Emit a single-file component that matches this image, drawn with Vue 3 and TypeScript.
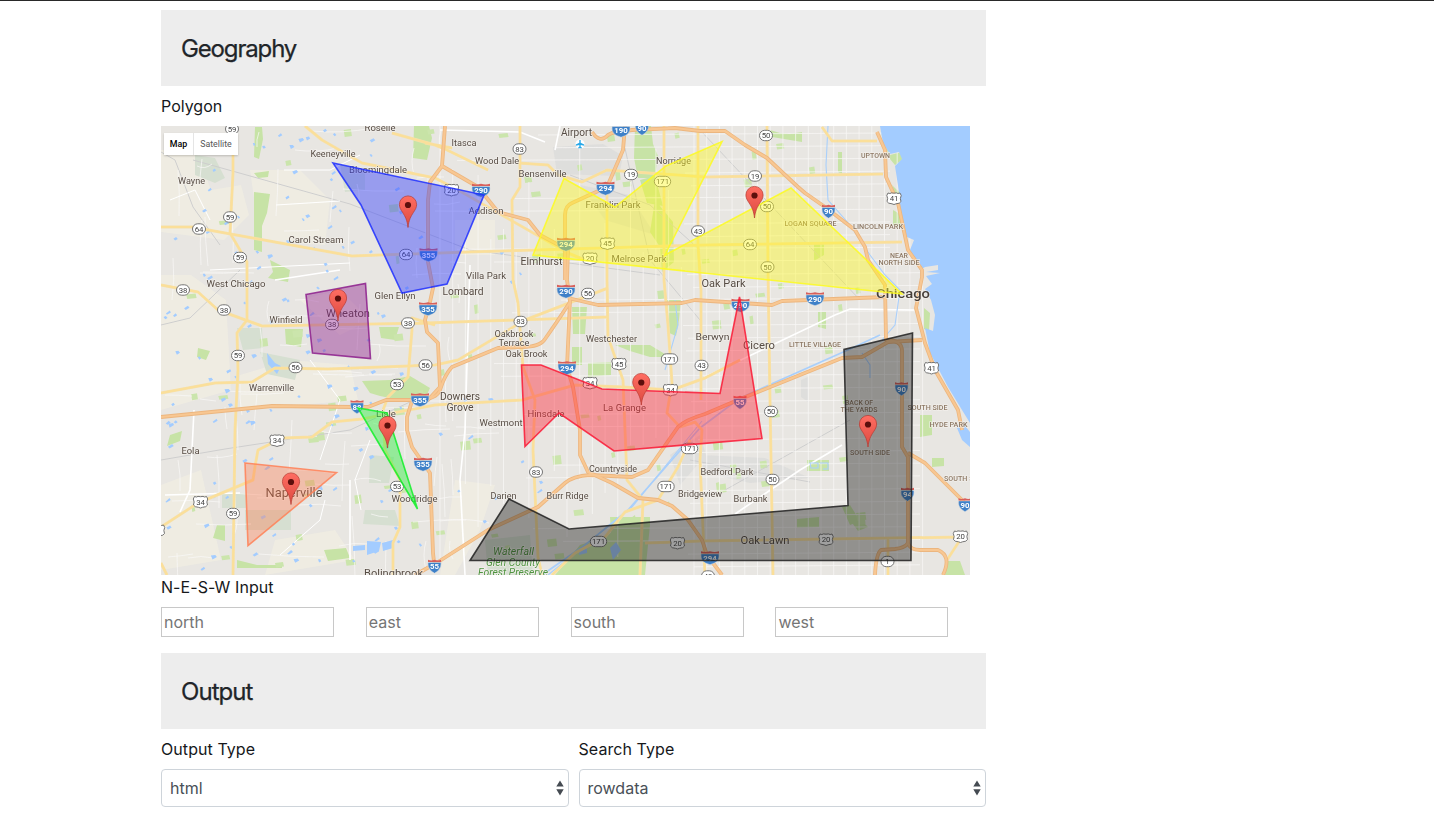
<script setup lang="ts">
import { ref } from 'vue'

interface Label { t: string; x: number; y: number; w: number; s: number; k?: string }
interface Area { name: string; points: string; stroke: string; fill: string; opacity: number }
type Shield = [kind: 'o' | 'u' | 'i', text: string, x: number, y: number]

const bounds = ref([
  { name: 'north', value: '' },
  { name: 'east', value: '' },
  { name: 'south', value: '' },
  { name: 'west', value: '' },
])
const selects = ref([
  { label: 'Output Type', value: 'html' },
  { label: 'Search Type', value: 'rowdata' },
])

// Small deterministic generator, so streets and ponds keep their places.
let seed = 7
const rnd = (): number => {
  seed = (seed * 16807) % 2147483647
  return seed / 2147483647
}

const streets: string[] = []
for (let x = 440; x < 925; x += 12.7) {
  const a = x > 690 ? 126 : 126 + rnd() * 150
  streets.push(`M${x.toFixed(1)} ${a.toFixed(0)}V${(x > 690 ? 575 : 380 + rnd() * 195).toFixed(0)}`)
}
for (let y = 135; y < 575; y += 12.7) {
  streets.push(`M${(x0(y)).toFixed(0)} ${y.toFixed(1)}L${y < 270 ? 890 : 920} ${(y - 2).toFixed(1)}`)
}
function x0(y: number): number {
  return y % 3 > 1.4 ? 680 + rnd() * 20 : 450 + rnd() * 120
}
for (let i = 0; i < 95; i++) {
  const x = 165 + rnd() * 300
  const y = 130 + rnd() * 430
  const l = 15 + rnd() * 50
  streets.push(
    rnd() > 0.5
      ? `M${x.toFixed(0)} ${y.toFixed(0)}q${(l / 2).toFixed(0)} ${(rnd() * 8 - 4).toFixed(0)} ${l.toFixed(0)} ${(rnd() * 6 - 3).toFixed(0)}`
      : `M${x.toFixed(0)} ${y.toFixed(0)}q${(rnd() * 8 - 4).toFixed(0)} ${(l / 2).toFixed(0)} ${(rnd() * 6 - 3).toFixed(0)} ${l.toFixed(0)}`,
  )
}
const ponds = Array.from({ length: 150 }, () => {
  const x = 163 + rnd() * (rnd() > 0.25 ? 240 : 390)
  const y = 130 + rnd() * 440
  const a = 1.5 + rnd() * 3
  return `M${x.toFixed(1)} ${y.toFixed(1)}l${a.toFixed(1)} ${(-a * rnd()).toFixed(1)} ${(1 + rnd()).toFixed(1)} 2 ${(-a).toFixed(1)} ${(a * 0.6).toFixed(1)}z`
}).join('')
const greens = Array.from({ length: 95 }, () => {
  const x = 165 + rnd() * 720
  const y = 130 + rnd() * 435
  const w = 3 + rnd() * 7
  const h = 3 + rnd() * 6
  return `M${x.toFixed(1)} ${y.toFixed(1)}l${w.toFixed(1)} -1 1 ${h.toFixed(1)} -${w.toFixed(1)} 1z`
}).join('')

const parks = [
  'M254 173l15-2-1 6-10 1zM254 192l16 2-3 19-5 13 0 26-8-2zM270 260l20 10-2 12-20-4 5-6zM255 127l7 0 1 12-4 20-5-2z',
  'M414 126l15 0 3 12-5 22-14-2zM198 348l12 3-4 9-9-3zM285 329l18 0-2 18-15-3zM379 327l20 0-4 13-14-2zM362 381l28-1 20-4 20 12-5 11-35-1-10-2-10-3z',
  'M635 126l16 0 2 18 5 12-3 22-17 0-4-20zM640 180l15-4 8 30-16-3zM655 200l18 22 1 40-12 10-2-25-10-15z',
  'M572 307l15 0-2 27-12 0zM572 347l10 0 0 18-10 0zM588 363l23-1 0 13-23 2zM667 300l14 0-2 20-3 16-9-4zM615 345l35 0 20 12-20 0-20-6z',
  'M610 517l40 0 0 8-5 50-65 0 12-12 20-12zM580 545l25-8 30-22 10 60-90 0z',
  'M818 312l8 0 0 17-8-2zM838 152l4 0 0 22-4-2zM770 130l10 3 10 1 12-2 0 10-12-2-18-3zM814 243l10 0 0 12-10 6z',
  'M842 507l8-2 10 16-10 4zM850 520l10-1 8 8-10 4zM797 519l22-2 0 10-22 1zM807 460l22 0 0 11-22 0zM920 415l12 0 0 20-12 2zM932 458l12 0 0 8-12 1zM948 561l12 0 5 14-20 0z',
  'M880 130l10 25 12-3 0 8-7 5-5-6zM892 185l8 8-3 10zM893 210l7 4 2 13-9-2zM924 308l6 5-1 18-5-2zM324 550l22-2 4 10-22 3zM237 560l20 5 25 0 0 3-45 0zM170 435l12-4-2 10-13 5zM217 525l8 0 0 16-12-3z',
]
const forest = [
  'M195 155l20 3 10 20-10 5-20-8zM237 328l25 0 1 20-20 2zM260 352l40 8-5 20-28-6zM340 164l25 8 0 18-20 2zM245 510l46 0 0 20-46 0zM365 510l30 0 5 16-37-2zM222 493l24 0 0 15-24 0zM485 540l45-5 3 40-45 0zM370 455l24 2-5 26-20 0z',
]

const orangeRoads = [
  'M445 126L442 166 430 182 428 200 428 262 433 288 430 302 425 320 427 332 438 343 440 387 428 400 412 401 407 417 407 430 412 447 430 473 433 553 434 562',
  'M442 166L478 187 498 212 528 220 540 235 568 250 567 280 570 300 567 367 573 387 580 430 580 455 588 472 612 483 638 498 658 500 672 506 688 520 702 540 707 555 722 575',
  'M625 126L623 150 607 187 572 203Q565 206 565 215L565 280',
  'M592 132Q600 144 608 135L612 133 632 130 675 128 700 131 725 131 745 145 767 158 798 187 805 193 825 207 855 230 865 247 868 260 885 285 886 340Q902 340 902 351L902 447 908 457 908 543Q905 548 895 549L881 550Q876 554 875 575',
  'M908 453L925 463 965 503',
  'M908 543Q910 550 920 550L938 550Q952 556 943 575',
  'M568 298L598 305 682 303 695 300 772 305 782 301 885 297',
  'M570 302Q555 325 545 339 540 347 522 347L498 348 452 367Q445 374 440 390 437 400 412 401',
  'M161 417L272 406 352 407 368 407 386 400 428 400',
  'M415 575L438 562 488 530 538 507 565 483Q573 476 590 475L632 477 648 470 678 427Q685 420 705 414L738 400 842 358 862 357 888 342 922 340',
  'M877 132L885 150 886 177 898 203 908 250 922 270 922 277 916 308 925 343 935 370 958 410 962 430',
]
const yellowRoads = [
  'M233 126L233 173 230 233 247 262 247 320 237 333 238 370 235 430 233 575',
  'M161 227L192 227 352 256 468 252 705 245 902 242',
  'M305 126L322 140 362 163 435 178 458 190 528 230 568 253 592 263',
  'M392 133L435 145 445 149 488 170M425 143L452 148',
  'M161 285L198 292 218 310 262 326 435 323 425 323 608 317',
  'M161 393L215 383 252 382 275 368 328 369 435 365 458 360 525 320 608 288',
  'M435 325L412 318 412 330 408 377 388 397 383 410 385 450 400 480 400 527 393 543 393 575',
  'M161 527L198 503 253 480 Q255 465 258 450L282 438 312 437 332 422 362 419 435 405 522 400 575 385 623 387 672 390 705 378 740 360',
  'M520 126L520 187 512 200 513 280 518 303 523 367 535 400 533 450 538 557 542 575',
  'M607 187L607 280 608 337 623 380 625 430 627 480 643 500 640 575',
  'M664 126L664 280 668 325 672 383 667 413 680 427 695 422 702 430 700 460 705 575',
  'M698 126L698 245 701 290 701 400',
  'M767 126L768 270 770 400 773 575',
  'M518 163L548 165 558 175 582 182 607 170 705 177 883 174',
  'M822 127L832 141 877 141',
  'M645 543L701 541 962 537M888 538V575M962 537L947 560',
  'M552 575L575 553 605 537 625 512 658 500 678 467 690 440',
  'M161 563L167 575',
]

const labels: Label[] = [
  { t: 'Roselle', x: 380, y: 131, w: 31, s: 9 },
  { t: 'Keeneyville', x: 333, y: 157, w: 45, s: 9 },
  { t: 'Bloomingdale', x: 378, y: 173, w: 58, s: 9 },
  { t: 'Wayne', x: 191.5, y: 184, w: 27, s: 9 },
  { t: 'Carol Stream', x: 316, y: 243, w: 55, s: 9.5 },
  { t: 'Itasca', x: 464, y: 146, w: 25, s: 9 },
  { t: 'Wood Dale', x: 497, y: 164, w: 44, s: 9 },
  { t: 'Airport', x: 576.5, y: 135.5, w: 31, s: 10 },
  { t: 'Bensenville', x: 542.5, y: 177, w: 48, s: 9 },
  { t: 'Addison', x: 486, y: 214, w: 35, s: 9 },
  { t: 'Norridge', x: 673.5, y: 164, w: 35, s: 9 },
  { t: 'Franklin Park', x: 613, y: 208, w: 55, s: 9 },
  { t: 'Elmhurst', x: 541.5, y: 264.5, w: 42, s: 10.5 },
  { t: 'Melrose Park', x: 639, y: 262, w: 55, s: 9 },
  { t: 'Villa Park', x: 486, y: 279, w: 40, s: 9 },
  { t: 'Lombard', x: 463, y: 295, w: 41, s: 10 },
  { t: 'West Chicago', x: 236, y: 287, w: 59, s: 9.5 },
  { t: 'Glen Ellyn', x: 395, y: 298.5, w: 41, s: 9 },
  { t: 'Wheaton', x: 348, y: 317, w: 44, s: 11 },
  { t: 'Winfield', x: 286, y: 323, w: 33, s: 9 },
  { t: 'Warrenville', x: 271.5, y: 391, w: 45, s: 9 },
  { t: 'Lisle', x: 386, y: 417, w: 20, s: 9.5 },
  { t: 'Eola', x: 190.5, y: 454, w: 18, s: 9 },
  { t: 'Naperville', x: 294, y: 496.5, w: 57, s: 12.5 },
  { t: 'Woodridge', x: 414.5, y: 502, w: 46, s: 9 },
  { t: 'Bolingbrook', x: 393.5, y: 577, w: 59, s: 10 },
  { t: 'Oakbrook', x: 514, y: 336.5, w: 39, s: 9 },
  { t: 'Terrace', x: 514, y: 345.5, w: 31, s: 9 },
  { t: 'Oak Brook', x: 526.5, y: 356.5, w: 42, s: 9 },
  { t: 'Westchester', x: 611.5, y: 341.5, w: 51, s: 9 },
  { t: 'Downers', x: 460, y: 400, w: 40, s: 10 },
  { t: 'Grove', x: 460, y: 410.5, w: 27, s: 10 },
  { t: 'Westmont', x: 501, y: 425.5, w: 43, s: 9 },
  { t: 'Hinsdale', x: 546, y: 417, w: 37, s: 9 },
  { t: 'La Grange', x: 624.5, y: 411, w: 43, s: 9 },
  { t: 'Countryside', x: 613, y: 471.5, w: 48, s: 9 },
  { t: 'Darien', x: 503.5, y: 499, w: 26, s: 9 },
  { t: 'Burr Ridge', x: 567.5, y: 499, w: 42, s: 9 },
  { t: 'Bridgeview', x: 700, y: 497, w: 44, s: 9 },
  { t: 'Bedford Park', x: 727, y: 475, w: 53, s: 9 },
  { t: 'Burbank', x: 750.5, y: 502, w: 34, s: 9 },
  { t: 'Oak Lawn', x: 765, y: 544, w: 49, s: 11 },
  { t: 'Oak Park', x: 723.5, y: 287, w: 44, s: 10.5 },
  { t: 'Berwyn', x: 712.5, y: 340, w: 34, s: 9.5 },
  { t: 'Cicero', x: 759, y: 348.5, w: 32, s: 10.5 },
  { t: 'Chicago', x: 903, y: 298, w: 54, s: 13, k: 'city' },
  { t: 'UPTOWN', x: 875.5, y: 158, w: 29, s: 7, k: 'area' },
  { t: 'LOGAN SQUARE', x: 810.5, y: 226, w: 52, s: 7, k: 'area' },
  { t: 'LINCOLN PARK', x: 878, y: 229, w: 50, s: 7, k: 'area' },
  { t: 'NEAR', x: 899, y: 257.5, w: 18, s: 7, k: 'area' },
  { t: 'NORTH SIDE', x: 899, y: 265, w: 41, s: 7, k: 'area' },
  { t: 'LITTLE VILLAGE', x: 815, y: 347, w: 52, s: 7, k: 'area' },
  { t: 'BACK OF', x: 859, y: 404.5, w: 28, s: 7, k: 'area' },
  { t: 'THE YARDS', x: 859, y: 412, w: 37, s: 7, k: 'area' },
  { t: 'SOUTH SIDE', x: 927.5, y: 409.5, w: 40, s: 7, k: 'area' },
  { t: 'HYDE PARK', x: 948.5, y: 427, w: 38, s: 7, k: 'area' },
  { t: 'SOUTH SIDE', x: 870, y: 455, w: 40, s: 7, k: 'area' },
  { t: 'SOUTH SHORE', x: 968, y: 480.5, w: 48, s: 7, k: 'area' },
  { t: 'Waterfall', x: 513.5, y: 555, w: 41, s: 10, k: 'nature' },
  { t: 'Glen County', x: 513, y: 565.5, w: 54, s: 10, k: 'nature' },
  { t: 'Forest Preserve', x: 513, y: 576, w: 70, s: 10, k: 'nature' },
]

const shields: Shield[] = [
  ['o', '59', 232, 129], ['o', '59', 230, 217], ['o', '64', 199, 229], ['o', '59', 240, 257.5], ['o', '64', 406, 254.5],
  ['o', '38', 183, 290], ['o', '38', 224, 310], ['o', '38', 332, 324.5], ['o', '38', 408, 323], ['o', '59', 238, 355.5],
  ['o', '56', 295.5, 367.5], ['o', '56', 425.5, 365], ['o', '53', 397, 384.5], ['u', '34', 277, 440.5], ['u', '34', 200.5, 502],
  ['o', '59', 233, 513.5], ['u', '', 157.5, 530.5], ['o', '53', 397, 486.5], ['o', '83', 519.5, 149], ['u', '20', 451.5, 190], ['o', '19', 631, 174.5],
  ['o', '171', 662.5, 181.5], ['u', '45', 607.5, 243.5], ['u', '20', 590, 258.5], ['o', '43', 698, 231], ['o', '50', 766, 135.5],
  ['o', '19', 755, 176], ['o', '50', 767, 206.5], ['o', '64', 750, 244.5], ['o', '50', 767.5, 267], ['u', '41', 894, 198.5],
  ['o', '56', 588, 293.5], ['o', '83', 520.5, 321.5], ['u', '45', 619, 364], ['o', '171', 669.5, 359], ['o', '43', 701.5, 365.5],
  ['u', '34', 590, 383], ['u', '34', 670.5, 390], ['u', '41', 931.5, 368], ['o', '50', 771, 411.5], ['o', '171', 689.5, 448.5],
  ['o', '83', 536, 472], ['o', '171', 666, 486.5], ['o', '171', 598.5, 541.5], ['u', '20', 677.5, 543], ['o', '50', 772.5, 479.5],
  ['u', '20', 826, 539.5], ['u', '20', 960.5, 536.5], ['o', '1', 887.5, 561.5], ['o', '43', 708, 576],
  ['i', '290', 481, 190], ['i', '355', 428.5, 254.5], ['i', '190', 621, 130], ['i', '90', 642, 128], ['i', '294', 605.5, 188],
  ['i', '294', 566, 244], ['i', '90', 828.5, 211], ['i', '355', 428, 308.5], ['i', '290', 566, 291], ['i', '294', 567, 367.5],
  ['i', '290', 740.5, 305], ['i', '290', 815, 298.5], ['i', '355', 420, 399.5], ['i', '88', 357, 406.5], ['i', '55', 740, 402],
  ['i', '90', 901.5, 388.5], ['i', '355', 423, 464], ['i', '55', 434.5, 566], ['i', '94', 907.5, 494], ['i', '90', 965, 504.5], ['i', '294', 710, 557.5],
]

const areas: Area[] = [
  { name: 'blue', points: '333,163 484,195 447,284 402,293 361,205', stroke: '#1f2fff', fill: '#2733ff', opacity: 0.41 },
  { name: 'purple', points: '306,294.5 365.5,283.5 370.5,358.5 312.5,353', stroke: '#8c1d8c', fill: '#8b198b', opacity: 0.41 },
  { name: 'green', points: '358,408 387,413 417.5,509', stroke: '#12ee28', fill: '#20f034', opacity: 0.42 },
  { name: 'coral', points: '245,463 336.5,472.5 248,545.5', stroke: '#ff8056', fill: '#ff7246', opacity: 0.35 },
  { name: 'yellow', points: '564,178.5 615,207 666,166 722,141.5 665,255 791,188 902,294 533,255', stroke: '#fdfc20', fill: '#fdf920', opacity: 0.43 },
  { name: 'red', points: '521.5,365 541,365 602,389 720,393.5 739.5,297 762,438.5 614,451 559,413 525,446.5', stroke: '#fa1935', fill: '#ff2030', opacity: 0.41 },
  { name: 'black', points: '509,499 569,529 848,505.5 844,349.5 912.5,333 911,560.5 470,560.5', stroke: '#202020', fill: '#111', opacity: 0.4 },
]

const pins: [number, number][] = [
  [408, 205], [338, 298.5], [387.5, 425.5], [291, 482], [754.5, 195.5], [641.3, 382.5], [868, 424.5],
]
const plates = { i2: 6.5, i3: 9 }
const halfWidth = (s: Shield): number => (s[0] === 'i' ? (s[1].length > 2 ? plates.i3 : plates.i2) : s[1].length > 2 ? 8.2 : 6.5)
const iPath = (w: number): string =>
  `M${-w} -3.6H${w}Q${w + 0.6} 1 ${w - 2.2} 4 ${w - 4} 5.8 0 7.2 ${4 - w} 5.8 ${2.2 - w} 4 ${-w - 0.6} 1 ${-w} -3.6Z`
const iTop = (w: number): string => `M${-w} -4V-6.2Q${-w / 2} -5 0 -6.2 ${w / 2} -5 ${w} -6.2V-4Z`
</script>

<template>
  <div class="page">
    <main class="content">
      <h2 class="section-title">Geography</h2>
      <div class="caption polygon-caption">Polygon</div>
      <div class="map">
        <svg class="canvas" viewBox="161 126 809 449" width="809" height="449">
          <defs>
            <linearGradient id="pin-red" x1="0" y1="0" x2="0" y2="1">
              <stop offset="0" stop-color="#ff6d62" />
              <stop offset="1" stop-color="#dc4a40" />
            </linearGradient>
            <filter id="soft" x="0" y="0" width="1" height="1">
              <feGaussianBlur stdDeviation="0.45" />
            </filter>
          </defs>
          <rect x="161" y="126" width="809" height="449" fill="#e8e6e2" />
          <g filter="url(#soft)">
            <path
              fill="#f0ede2"
              d="M161 150h35l15 40 30-5 8 30-25 25-63-8zM161 275l30 0 35 25 5 90-70 20zM250 170l50 0 30 30-5 45-65-5zM240 375l50-15 60 5 8 35-118 10zM161 485l40-15 20 90-60 10zM300 300l40-10 30 30-30 15zM275 540l60-10 20 30-90 15zM455 480l40 5-15 45-25 45-15 0zM455 220l40 0 0 35-40 0z"
              opacity="0.8"
            />
            <path
              fill="#dadada"
              opacity="0.7"
              d="M553 147l50-3 20 12-4 20-62-2zM580 185l50 10 25 40-50-15zM700 455l65 3 45 20-60 5-45-10zM801 380l7-3 0 25-7-5zM670 455l30-20 6 20-26 30z"
            />
            <path v-for="(d, i) in forest" :key="'f' + i" :d="d" fill="#d6dfd1" />
            <path v-for="(d, i) in parks" :key="'p' + i" :d="d" fill="#c7e3a6" />
            <path :d="greens" fill="#cbe5ac" />
            <g fill="none" stroke="#cecece" stroke-width="1">
              <path d="M161 152L175 160 193 207 220 245M193 160L350 204 470 250 660 275M161 460L225 449 350 430 410 402M570 175L650 205 700 250M620 126L650 260 700 320M690 460L810 482M700 130L860 300M725 490L850 420M161 325L190 318 240 270" />
            </g>
            <path :d="streets.join('')" fill="none" stroke="#f8f7f5" stroke-width="1" opacity="0.75" />
            <g fill="none" stroke="#fff" stroke-width="1.6">
              <path d="M194 410L190 490 180 512M470 265L465 430 460 480 465 575M440 130L520 132 545 142M560 126L555 150M699 380L835 315 850 309 914 310M735 514L800 470 842 445M350 480L350 560M165 495L240 493M275 280L340 270" />
              <path stroke-width="1" d="M284 170H330L360 155M276 205L340 201M210 270L350 263M170 200L195 190 210 220M310 360L340 400 320 460M361 510L355 480 370 440M280 555L320 520 325 500" />
            </g>
            <g fill="none" stroke="#a9cffb" stroke-width="1.7">
              <path d="M542 575L585 545 628 510 700 428 740 398 850 349 880 335" />
              <path stroke-width="1.1" d="M548 575L632 507 702 421M828 126L826 165 828 200 850 225 870 255 885 275 900 290 895 325 882 340M675 300L678 325 665 370M862 353L870 365 870 378M810 463h8v5h-7zM820 463h8v6h-5" />
            </g>
            <path :d="ponds" fill="#a3ccff" />
            <path fill="#a3ccff" d="M353 546l12-1 0 5-12 1zM367 541l14 1-2 9-12 4zM382 543l11-3 0 8-10 3zM267 353l8 10 6 3-4 8-9-10zM610 548l6-6 5 8-8 10zM580 548l7-2 0 7-8 2z" />
            <path
              class="lake"
              d="M880 126L883 143 890 154 899 152 902 159 895 166 899 192 901 220 907 237 914 240 910 250 920 270 925 267 938 265 938 270 926 272 940 273 926 276 932 284 925 289 931 300 935 315 933 331 925 328 930 353 948 387 962 410 970 423V126ZM957 428L962 440 970 447V432L961 421Z"
            />
            <g fill="none" stroke-linejoin="round">
              <path v-for="(d, i) in yellowRoads" :key="'yc' + i" :d="d" stroke="#f4e0ae" stroke-width="3" />
              <path v-for="(d, i) in yellowRoads" :key="'y' + i" :d="d" stroke="#fbdf99" stroke-width="2" />
              <path v-for="(d, i) in orangeRoads" :key="'oc' + i" :d="d" stroke="#ecb67f" stroke-width="3.8" />
              <path v-for="(d, i) in orangeRoads" :key="'o' + i" :d="d" stroke="#f8c792" stroke-width="2.2" />
            </g>
          </g>

          <g class="labels">
            <text
              v-for="(l, i) in labels"
              :key="i"
              :class="l.k"
              :x="l.x"
              :y="l.y"
              :font-size="l.s"
              :textLength="l.w"
              lengthAdjust="spacingAndGlyphs"
            >{{ l.t }}</text>
          </g>
          <g transform="translate(580 144)">
            <circle r="4.6" fill="#fff" />
            <path fill="#29a8e8" d="M-.7 -4H.7V-1.2L4.2 .6V1.8L.7 .9V2.8L2 3.7V4.3H-2V3.7L-.7 2.8V.9L-4.2 1.8V.6L-.7 -1.2Z" />
          </g>

          <g v-for="(s, i) in shields" :key="'s' + i" :transform="`translate(${s[2]} ${s[3]})`" class="shield">
            <template v-if="s[0] === 'i'">
              <path :d="iPath(halfWidth(s))" fill="#3e80c8" stroke="#e8e6e2" stroke-width="0.5" />
              <path :d="iTop(halfWidth(s))" fill="#d8605b" />
              <text class="inter" y="3.2">{{ s[1] }}</text>
            </template>
            <template v-else>
              <rect
                v-if="s[0] === 'o'"
                :x="-halfWidth(s)" y="-5.2" :width="halfWidth(s) * 2" height="10.4" rx="5.2"
                fill="#fff" stroke="#666" stroke-width="0.9"
              />
              <path
                v-else
                d="M-6 -5.5Q-4 -4.4 -2.5 -5.6 0 -5 2.5 -5.6 4 -4.4 6 -5.5L7.2 -3Q5.6 0 7 3 6 5.2 2 5.3L0 6 -2 5.3Q-6 5.2 -7 3 -5.6 0 -7.2 -3Z"
                fill="#fff" stroke="#666" stroke-width="0.9"
              />
              <text v-if="s[1]" y="2.8">{{ s[1] }}</text>
            </template>
          </g>

          <polygon
            v-for="a in areas"
            :key="a.name"
            :points="a.points"
            :fill="a.fill"
            :fill-opacity="a.opacity"
            :stroke="a.stroke"
            stroke-opacity="0.85"
            stroke-width="1.6"
          />

          <g v-for="(p, i) in pins" :key="'pin' + i" :transform="`translate(${p[0]} ${p[1]})`">
            <path
              d="M0 22.5C-.8 15 -2.8 11.5 -5.5 7.3 -7.3 4.6 -8.6 2.5 -8.6 -.5A8.6 8.6 0 0 1 8.6 -.5C8.6 2.5 7.3 4.6 5.5 7.3 2.8 11.5 .8 15 0 22.5Z"
              fill="url(#pin-red)" stroke="#b8382f" stroke-width="0.7"
            />
            <circle r="3.1" fill="#5c0f0c" />
          </g>
        </svg>
        <div class="map-types">
          <button class="map-type active" type="button">Map</button>
          <button class="map-type" type="button">Satellite</button>
        </div>
      </div>

      <div class="caption wide">N-E-S-W Input</div>
      <div class="bounds">
        <input v-for="b in bounds" :key="b.name" v-model="b.value" class="bound" type="text" :placeholder="b.name" />
      </div>

      <h2 class="section-title output-title">Output</h2>
      <div class="selects">
        <label v-for="s in selects" :key="s.label" class="field">
          <span class="caption wide">{{ s.label }}</span>
          <span class="select-box">
            <select v-model="s.value" class="select">
              <option :value="s.value">{{ s.value }}</option>
            </select>
            <svg class="arrows" viewBox="0 0 8 16" width="8" height="16">
              <path d="M.3 6.6L4 .4 7.7 6.6ZM.3 9.2H7.7L4 15.4Z" fill="#454b52" />
            </svg>
          </span>
        </label>
      </div>
    </main>
  </div>
</template>

<style>
body {
  margin: 0;
  background: #fff;
}
</style>

<style scoped>
.page {
  box-sizing: border-box;
  height: 821px;
  overflow: hidden;
  border-top: 1px solid #292929;
  padding: 9px 0 0 161px;
  font-family: Inter, "Liberation Sans", sans-serif;
  font-size: 16px;
  line-height: 24px;
  color: #212529;
}
.content {
  width: 825px;
}
.section-title {
  box-sizing: border-box;
  height: 76px;
  margin: 0;
  padding: 24px 20px;
  background: #ededed;
  font-size: 24px;
  font-weight: 400;
  line-height: 29px;
  letter-spacing: -1.15px;
  -webkit-text-stroke: 0.25px #212529;
}
.output-title {
  letter-spacing: -0.95px;
}
.caption {
  display: block;
  height: 24px;
  color: #16181b;
}
.caption.wide {
  letter-spacing: 0.07px;
}
.polygon-caption {
  margin: 8px 0;
}
.map {
  position: relative;
  width: 809px;
  height: 449px;
  overflow: hidden;
}
.canvas {
  display: block;
}
.lake {
  fill: #a3ccff;
}
.labels {
  font-family: Roboto, sans-serif;
  fill: #554b43;
  text-anchor: middle;
  stroke: #f4f2ee;
  stroke-width: 1.3px;
  stroke-opacity: 0.75;
  paint-order: stroke;
}
.labels .city {
  font-weight: 500;
  fill: #463e39;
}
.labels .area {
  fill: #8c7864;
  font-weight: 500;
}
.labels .nature {
  fill: #4f9440;
  font-style: italic;
}
.shield {
  font-family: Roboto, sans-serif;
  font-size: 7.8px;
  text-anchor: middle;
  fill: #444;
}
.shield .inter {
  fill: #fff;
  font-size: 7.8px;
  font-weight: 700;
}
.map-types {
  position: absolute;
  top: 7px;
  left: 3px;
  display: flex;
  height: 22px;
  background: #fff;
  box-shadow: 0 1px 2px rgba(0, 0, 0, 0.2);
}
.map-type {
  width: 29px;
  padding: 0;
  border: 0;
  background: #fff;
  font: 400 8.8px/22px Roboto, sans-serif;
  color: #565656;
}
.map-type.active {
  color: #000;
  font-weight: 500;
}
.map-type:last-child {
  width: 45px;
  border-left: 1px solid #e5e5e5;
}
.bounds {
  display: flex;
  gap: 31.8px;
  margin: 8px 0 16px;
}
.bound {
  box-sizing: border-box;
  width: 173px;
  height: 30px;
  margin: 0;
  padding: 1px 2px;
  border: 1px solid #c8c8c8;
  background: #fff;
  font: inherit;
}
.bound::placeholder {
  color: #757575;
}
.selects {
  display: flex;
  gap: 10px;
  padding-top: 8px;
}
.field {
  display: flex;
  flex: 1;
  flex-direction: column;
  gap: 8px;
}
.select-box {
  position: relative;
  display: block;
  height: 38px;
}
.select {
  box-sizing: border-box;
  width: 100%;
  height: 38px;
  margin: 0;
  padding: 0 24px 0 8px;
  border: 1px solid #ced4da;
  border-radius: 4px;
  background: #fff;
  appearance: none;
  font: inherit;
  color: #495057;
}
.arrows {
  position: absolute;
  top: 11px;
  right: 5px;
}
</style>
